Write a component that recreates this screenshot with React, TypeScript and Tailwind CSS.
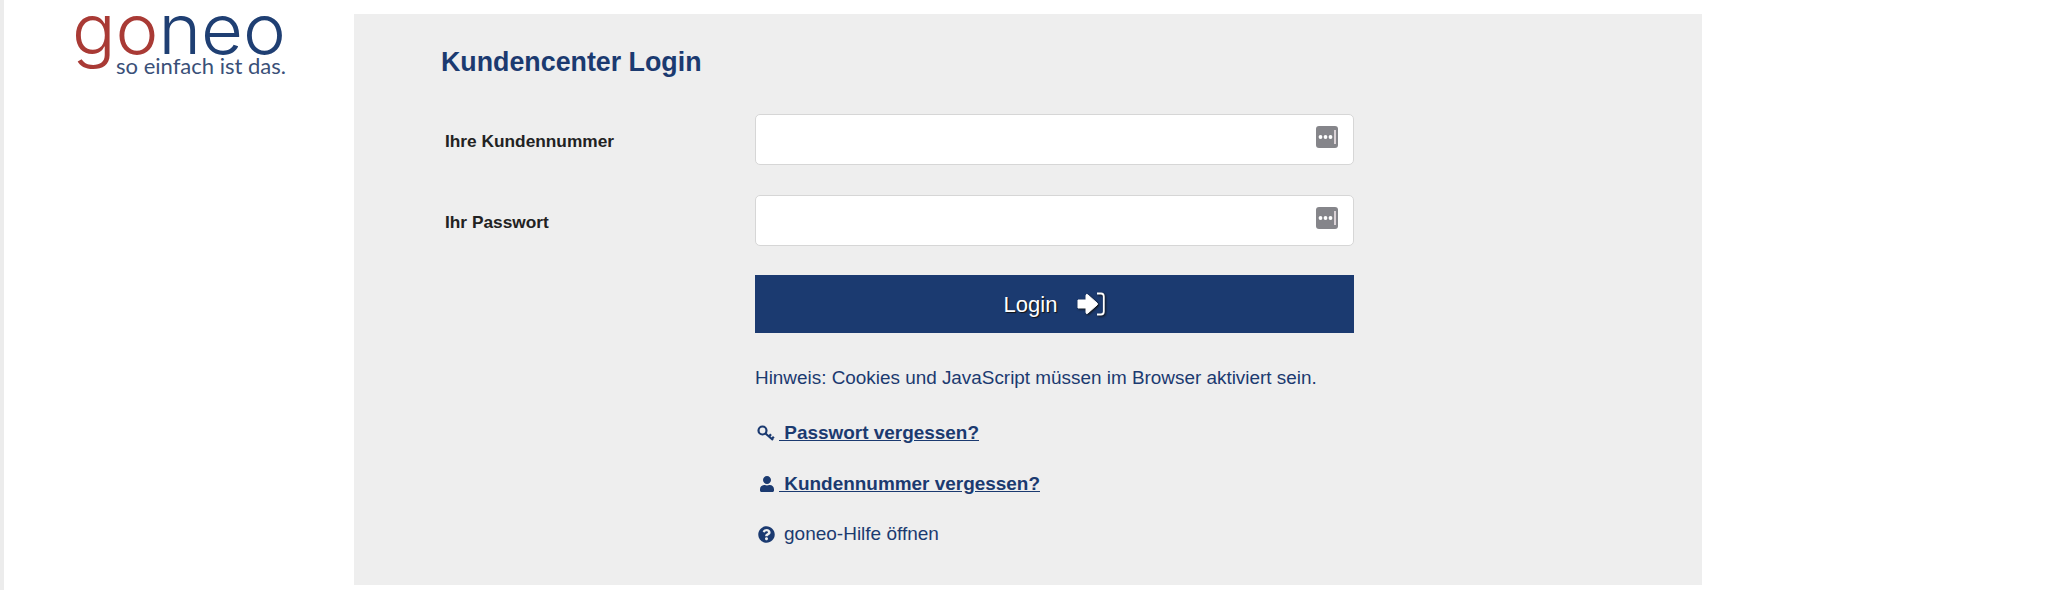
import { FaUser, FaQuestionCircle } from "react-icons/fa";

const navy = "text-[#1b3a70]";

function Dots() {
  return (
    <svg width="22" height="22" viewBox="0 0 22 22" className="absolute right-[15px] top-[11px]">
      <rect width="22" height="22" rx="3" fill="#85858a" />
      <circle cx="4.5" cy="11" r="1.9" fill="#fff" />
      <circle cx="9.5" cy="11" r="1.9" fill="#fff" />
      <circle cx="14.5" cy="11" r="1.9" fill="#fff" />
      <rect x="18.2" y="4" width="1.6" height="14" fill="#f0e6ea" />
    </svg>
  );
}

function Field({ label }: { label: string }) {
  return (
    <div className="flex items-center">
      <label className="w-[314px] pl-[4px] pt-[5px] text-[17.3px] font-bold text-[#222]">{label}</label>
      <div className="relative h-[51px] w-[599px] rounded-[5px] border border-[#d6d6d6] bg-white">
        <Dots />
      </div>
    </div>
  );
}

function KeyIcon() {
  return (
    <svg width="18" height="17" viewBox="0 0 18 17" fill="none" stroke="#1b3a70" strokeWidth="2.2">
      <circle cx="5.5" cy="5.5" r="4" />
      <path d="M8.5 8.5 L16 15 M12 11.5 L14 9.2 M14.8 14 L16.8 11.8" />
    </svg>
  );
}

function SignIn() {
  return (
    <svg width="28" height="24" viewBox="0 0 28 24" className="drop-shadow-[1px_1px_1px_#111]">
      <path
        d="M1 8 H9 V3.5 Q9 1.5 11 3 L20 11 Q21 12 20 13 L11 21 Q9 22.5 9 20.5 V16 H1 Z"
        fill="#fff"
        stroke="#fff"
        strokeWidth="1"
        strokeLinejoin="round"
      />
      <path d="M20 1.5 H24 Q26.8 1.5 26.8 4.5 V19.5 Q26.8 22.5 24 22.5 H20" fill="none" stroke="#fff" strokeWidth="1.8" />
    </svg>
  );
}

function Logo() {
  return (
    <svg width="222" height="76" viewBox="0 0 222 76">
      <text x="0" y="51" fontFamily="Inter, sans-serif" fontSize="70" fontWeight="300" textLength="214" lengthAdjust="spacingAndGlyphs">
        <tspan fill="#a93a35">go</tspan>
        <tspan fill="#1f3f73">neo</tspan>
      </text>
      <text x="44" y="71" fontFamily="Lato, sans-serif" fontSize="21" fill="#3a5078" textLength="170" lengthAdjust="spacingAndGlyphs">
        so einfach ist das.
      </text>
    </svg>
  );
}

export default function App() {
  return (
    <div className="h-[590px] overflow-hidden bg-white font-['Liberation_Sans',Arial,sans-serif]">
      <div className="flex h-full border-l-[4px] border-[#ececec]">
        <div className="w-[350px] shrink-0 pl-[68px] pt-[3px]">
          <Logo />
        </div>
        <main className="mt-[14px] mb-[5px] flex w-[1348px] flex-col bg-[#eeeeee] pl-[87px]">
          <h1 className={`mt-[32px] text-[26.8px] font-bold leading-[32px] ${navy}`}>Kundencenter Login</h1>
          <div className="mt-[36px] flex flex-col gap-[30px]">
            <Field label="Ihre Kundennummer" />
            <Field label="Ihr Passwort" />
          </div>
          <div className="ml-[314px] flex w-[599px] flex-col">
            <button className="mt-[29px] flex h-[58px] items-center justify-center gap-[20px] bg-[#1b3a70] text-[22px] text-white [text-shadow:1px_1px_1px_#111]">
              Login
              <SignIn />
            </button>
            <p className={`mt-[33px] text-[18.9px] leading-[24px] ${navy}`}>
              Hinweis: Cookies und JavaScript müssen im Browser aktiviert sein.
            </p>
            <a className={`mt-[31px] flex items-center text-[18.95px] font-bold leading-[24px] ${navy}`}>
              <span className="w-[24px] pl-[2px]"><KeyIcon /></span>
              <span className="underline">&nbsp;Passwort vergessen?</span>
            </a>
            <a className={`mt-[27px] flex items-center text-[18.95px] font-bold leading-[24px] ${navy}`}>
              <span className="w-[24px] pl-[4px]"><FaUser size={16} /></span>
              <span className="underline">&nbsp;Kundennummer vergessen?</span>
            </a>
            <a className={`mt-[26px] flex items-center text-[19px] leading-[24px] ${navy}`}>
              <span className="w-[29px] pl-[3px]"><FaQuestionCircle size={17} /></span>
              <span>goneo-Hilfe öffnen</span>
            </a>
          </div>
        </main>
      </div>
    </div>
  );
}
